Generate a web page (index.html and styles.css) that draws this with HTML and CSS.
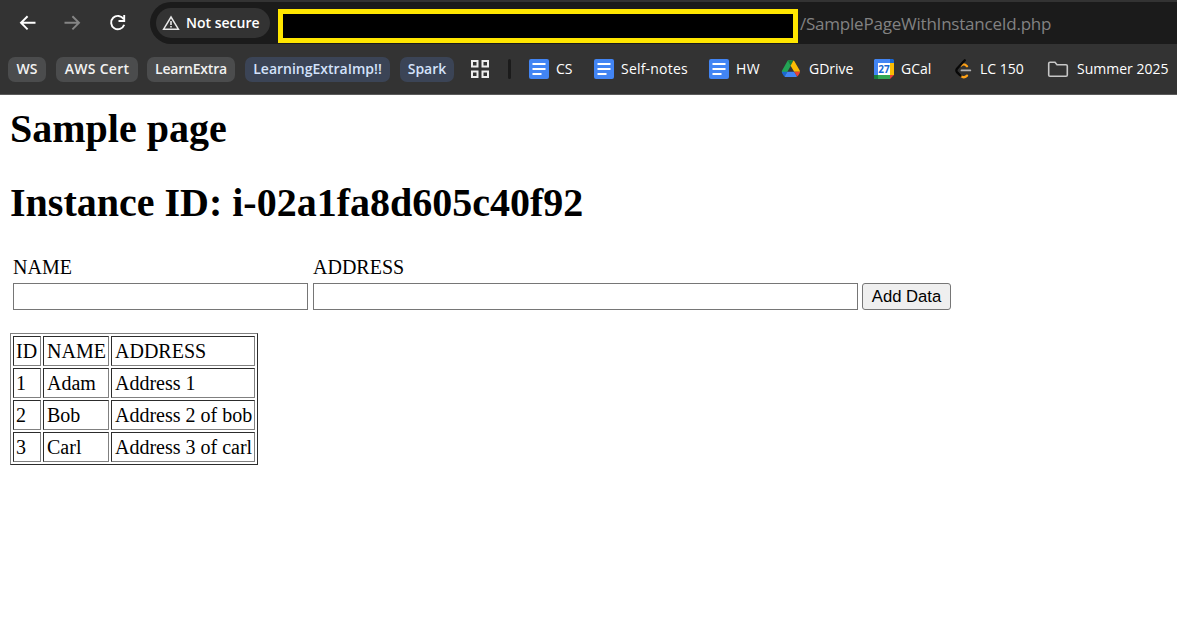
FILE: index.html
```html
<!DOCTYPE html>
<html lang="en">
<head>
<meta charset="utf-8">
<title>Sample page</title>
<link rel="stylesheet" href="styles.css">
</head>
<body>
<header class="chrome">
  <div class="toolbar">
    <svg class="nav-icon" width="18" height="18" viewBox="0 0 18 18"><path d="M16.5 8.7H2.5M8.6 2.2L2 8.7l6.6 6.6"/></svg>
    <svg class="nav-icon disabled" width="18" height="18" viewBox="0 0 18 18"><path d="M0.5 8.7h14M8.4 2.2l6.6 6.5-6.6 6.6"/></svg>
    <svg class="nav-icon" width="18" height="18" viewBox="0 0 18 18"><path d="M14.6 5.1A6.7 6.7 0 1 0 15.2 10.8M15.2 1v6H9.5"/></svg>
    <div class="omnibox">
      <div class="security">
        <svg width="18" height="16" viewBox="0 0 18 16"><path d="M9 2L16.4 14.2H1.6Z" fill="none" stroke="#e8e8e8" stroke-width="1.5"/><path d="M9 6v4M9 11v1.6" stroke="#e8e8e8" stroke-width="1.6"/></svg>
        <span class="security-text">Not secure</span>
      </div>
      <div class="redacted"></div>
      <span class="path">/SamplePageWithInstanceId.php</span>
    </div>
  </div>
  <nav class="bookmarks">
    <span class="pill ws">WS</span>
    <span class="pill aws">AWS Cert</span>
    <span class="pill learn">LearnExtra</span>
    <span class="pill blue imp">LearningExtraImp!!</span>
    <span class="pill blue spark">Spark</span>
    <svg class="apps" width="18" height="18" viewBox="0 0 18 18"><path d="M1 1h5.5v5.5H1zM11.5 1H17v5.5h-5.5zM1 11.5h5.5V17H1zM11.5 11.5H17V17h-5.5z" fill="none" stroke="#eee" stroke-width="2"/></svg>
    <i class="separator"></i>
    <span class="bookmark cs"><svg width="20" height="20" viewBox="0 0 20 20"><rect width="20" height="20" rx="2" fill="#4285f4"/><path d="M3.5 5h13M3.5 10h13M3.5 15h9" stroke="#fff" stroke-width="2"/></svg><b>CS</b></span>
    <span class="bookmark notes"><svg width="20" height="20" viewBox="0 0 20 20"><rect width="20" height="20" rx="2" fill="#4285f4"/><path d="M3.5 5h13M3.5 10h13M3.5 15h9" stroke="#fff" stroke-width="2"/></svg><b>Self-notes</b></span>
    <span class="bookmark hw"><svg width="20" height="20" viewBox="0 0 20 20"><rect width="20" height="20" rx="2" fill="#4285f4"/><path d="M3.5 5h13M3.5 10h13M3.5 15h9" stroke="#fff" stroke-width="2"/></svg><b>HW</b></span>
    <span class="bookmark drive"><svg width="20" height="20" viewBox="0 0 20 20"><path d="M7.5 1.3h4L9.8 6.8 6.5 12.5 3.8 17.5 1 13.2Q.6 12.3 1.1 11.4L6.3 2.2Q6.8 1.3 7.5 1.3z" fill="#23a455"/><path d="M6.8 1.6h5.6L9.6 6.8z" fill="#188038"/><path d="M12.4 1.5Q13 1.6 13.4 2.3l5.2 9q.4.6.4 1.4h-5.8L9.6 6.8z" fill="#fbbc04"/><path d="M.8 12.7h5.6L3.6 17.5Q2.8 17 2.4 16.3L1.2 14.2Q.8 13.5.8 12.7z" fill="#1967d2"/><path d="M6.4 12.7h6.8l2.9 4.9q-.5.4-1.3.4H5q-.8 0-1.4-.5z" fill="#4285f4"/><path d="M13.2 12.7H19q0 .8-.4 1.5l-1.2 2.1q-.5.9-1.3 1.3z" fill="#ea4335"/></svg><b>GDrive</b></span>
    <span class="bookmark gcal"><svg width="20" height="20" viewBox="0 0 20 20"><path d="M1 0h15v4H0V1z" fill="#4285f4"/><path d="M16 0h3l1 1v3h-4z" fill="#1967d2"/><path d="M0 4h4v12H0z" fill="#4285f4"/><path d="M4 4h12v12H4z" fill="#fff"/><path d="M16 4h4v12h-4z" fill="#fbbc04"/><path d="M0 16h16v4H1l-1-1z" fill="#34a853"/><path d="M0 16h4v4H1l-1-1z" fill="#188038"/><path d="M16 16h4l-4 4z" fill="#ea4335"/><text x="10" y="13.6" class="day">27</text></svg><b>GCal</b></span>
    <span class="bookmark lc"><svg width="20" height="20" viewBox="0 0 20 20" fill="none" stroke-width="2.3" stroke-linecap="round"><path d="M7 6.5q3-2.5 6 .7M7 17q3 2.8 6-.4" stroke="#ffa116"/><path d="M10.8 1.3L3.2 9.4Q1.5 11.4 3.2 13.4l3.4 3.4" stroke="#080808"/><path d="M7.5 11.4h8.8" stroke="#b3b3b3" stroke-width="1.8"/></svg><b>LC 150</b></span>
    <span class="bookmark folder"><svg width="22" height="18" viewBox="0 0 22 18"><path d="M3 2.2h5l2 2.5h9q1.3 0 1.3 1.3v9q0 1.3-1.3 1.3H3Q1.7 16.3 1.7 15V3.5Q1.7 2.2 3 2.2z" fill="none" stroke="#c7c7c7" stroke-width="1.6"/></svg><b>Summer 2025</b></span>
  </nav>
</header>
<main class="page">
  <h1>Sample page</h1>
  <h1>Instance ID: i-02a1fa8d605c40f92</h1>
  <form>
    <table class="entry">
      <tr><td>NAME</td><td>ADDRESS</td></tr>
      <tr><td><input class="field name" type="text"></td><td><input class="field address" type="text"></td><td><input class="add" type="button" value="Add Data"></td></tr>
    </table>
  </form>
  <table class="records">
    <tr><td class="col-id">ID</td><td class="col-name">NAME</td><td>ADDRESS</td></tr>
    <tr><td>1</td><td>Adam</td><td>Address 1</td></tr>
    <tr><td>2</td><td>Bob</td><td>Address 2 of bob</td></tr>
    <tr><td>3</td><td>Carl</td><td>Address 3 of carl</td></tr>
  </table>
</main>
</body>
</html>
```
FILE: styles.css
```css
* { box-sizing: border-box; }
body { margin: 0; height: 632px; overflow: hidden; background: #fff; color: #000; font: 20px "Liberation Serif", serif; }
.chrome { height: 95px; overflow: hidden; background: #333; border-bottom: 1px solid #5a5a5a; color: #fff; font-family: "Open Sans", "Noto Sans", sans-serif; }
.toolbar { height: 44px; padding: 2px 0 0 19px; display: flex; align-items: center; }
.nav-icon { flex: none; margin-right: 27px; fill: none; stroke: #fff; stroke-width: 1.9; }
.nav-icon.disabled { stroke: #858585; }
.omnibox { flex: 1; height: 42px; margin-left: -4px; padding-left: 6px; display: flex; align-items: center; background: #1b1b1b; border-radius: 21px 0 0 21px; white-space: nowrap; }
.security { flex: none; width: 114px; height: 30px; padding-left: 6px; display: flex; align-items: center; gap: 6px; background: #333; border-radius: 15px; }
.security-text { margin-top: -2px; font-size: 14px; font-weight: 600; }
.redacted { flex: none; width: 520px; height: 34px; margin: 6px 0 0 8px; background: #000; border: 5px solid #ffe600; }
.path { margin-left: 2px; color: #828282; font-size: 17px; letter-spacing: -0.22px; }
.bookmarks { height: 50px; padding-left: 8px; display: flex; align-items: center; white-space: nowrap; font-size: 14px; }
.pill { flex: none; height: 25px; margin-right: 10px; border-radius: 7px; background: #4b4c4d; color: #f2f2f2; font-weight: 600; line-height: 24px; text-align: center; }
.pill.blue { background: #3b4456; color: #d3e2fb; }
.ws { width: 38px; }
.aws { width: 82px; margin-right: 9px; letter-spacing: 0.3px; }
.learn { width: 88px; letter-spacing: -0.2px; }
.imp { width: 145px; }
.spark { width: 54px; margin-right: 17px; }
.apps { flex: none; }
.separator { flex: none; width: 3px; height: 20px; margin: 0 18px 0 19px; border-radius: 2px; background: #1b1b1b; }
.bookmark { flex: none; display: flex; align-items: center; gap: 7px; }
.bookmark svg { flex: none; }
.bookmark b { font-weight: 400; line-height: 20px; }
.cs { width: 65px; }
.notes { width: 115px; letter-spacing: 0.2px; }
.hw { width: 72px; letter-spacing: 0.4px; }
.drive { width: 93px; gap: 8px; }
.gcal { width: 80px; }
.lc { width: 93px; gap: 6px; }
.folder { gap: 8px; }
.day { font: 700 10px "Open Sans", sans-serif; letter-spacing: 0; fill: #1967d2; text-anchor: middle; }
.page { padding: 11px 10px; }
h1 { height: 47px; margin: 0 0 27px; font-size: 40px; line-height: 46px; }
h1 + h1 { margin-bottom: 25px; }
form { margin: 0; }
.entry { border-spacing: 2px; margin-left: 0; }
.entry td { padding: 1px; height: 26px; line-height: 24px; }
.entry tr + tr td { height: 29px; line-height: 0; }
.field { display: block; height: 27px; margin: 0; border: 1px solid #767676; border-radius: 0; background: #fff; }
.entry td { padding: 1px; }
.name { width: 295px; margin-right: 1px; }
.address { width: 545px; }
.add { display: block; width: 89px; height: 27px; padding: 0; border: 1px solid #767676; border-radius: 3px; background: #efefef; color: #000; font: 16.67px "Liberation Sans", sans-serif; }
.records { table-layout: fixed; width: 248px; margin-top: 20px; border: 1px solid; border-color: #808080 #2c2c2c #2c2c2c #808080; border-spacing: 2px; }
.records td { height: 30px; padding: 2px; border: 1px solid; border-color: #2c2c2c #808080 #808080 #2c2c2c; line-height: 24px; white-space: nowrap; }
.records .col-id { width: 28px; }
.records .col-name { width: 66px; }
.records td + td { padding-left: 3px; }
```
